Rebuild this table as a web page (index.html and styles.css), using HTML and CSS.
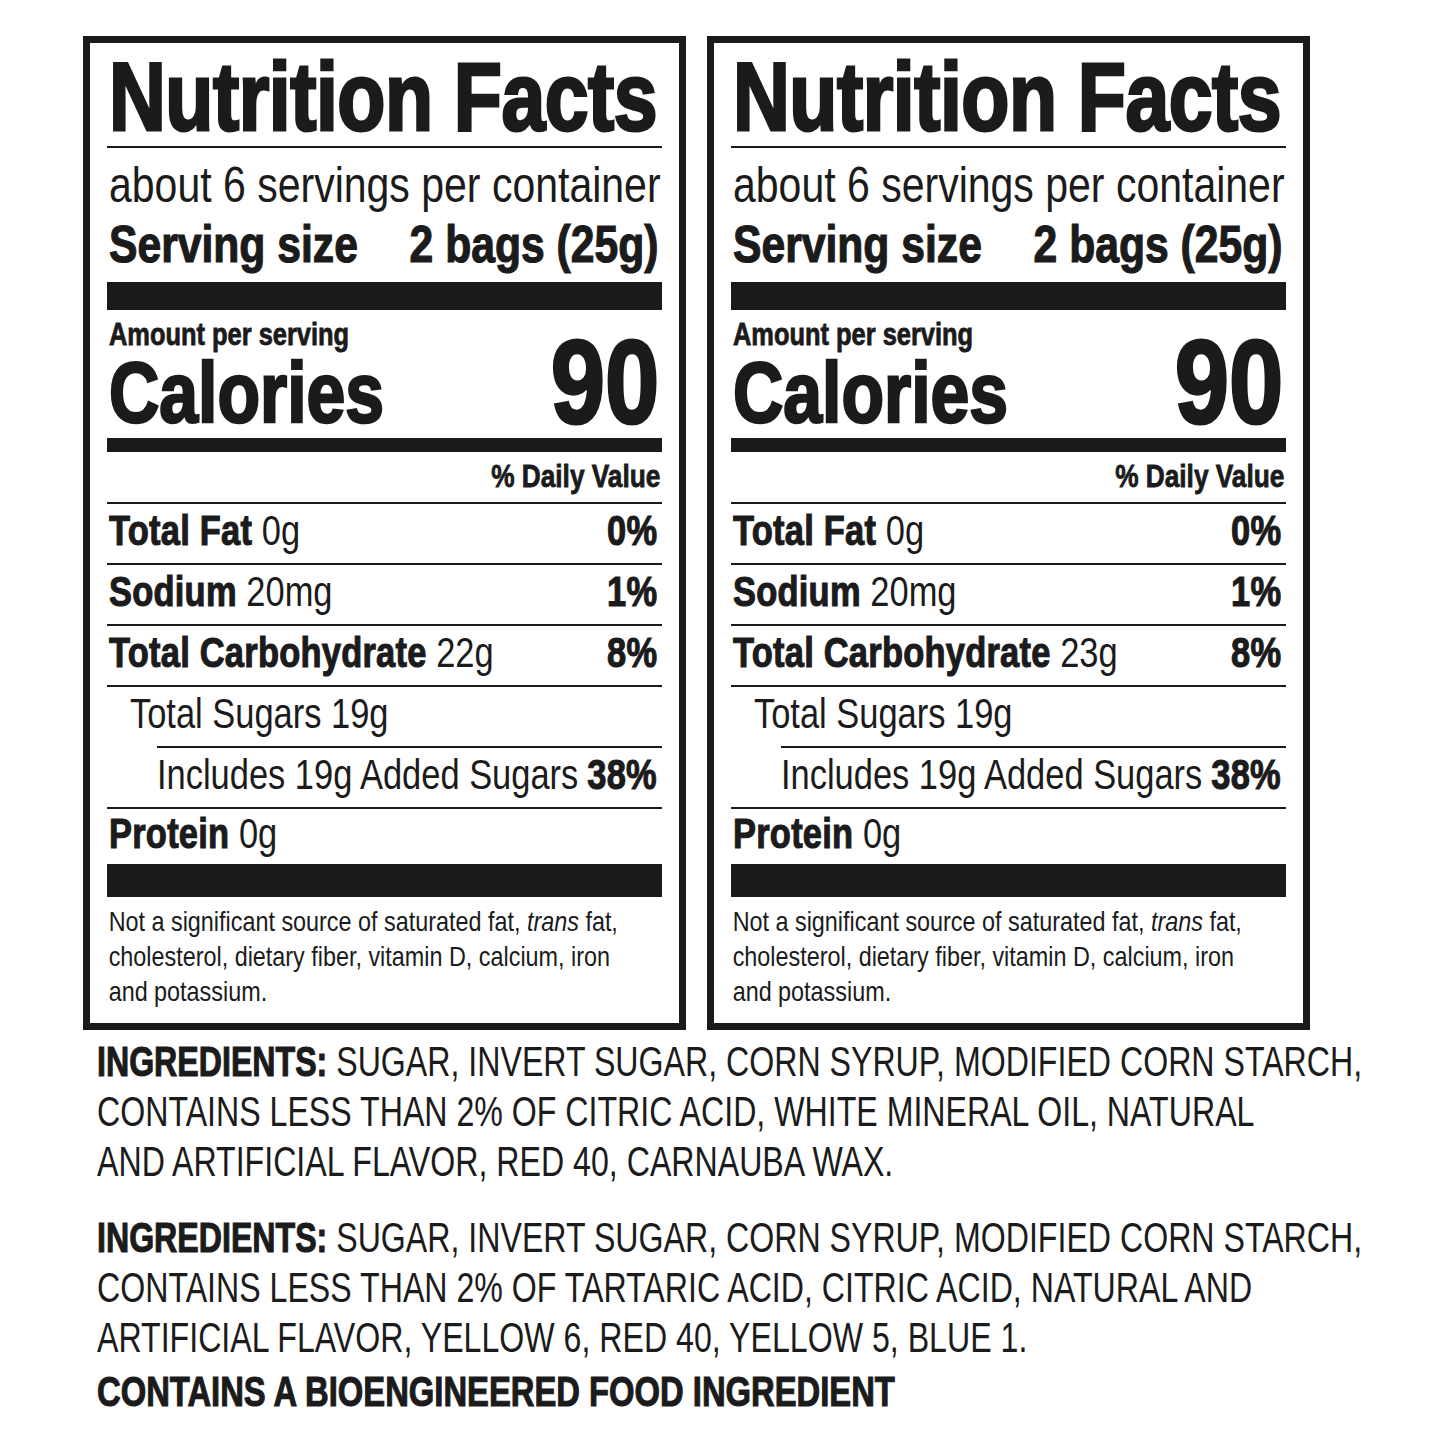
FILE: index.html
```html
<!DOCTYPE html>
<html lang="en">
<head>
<meta charset="utf-8">
<title>Nutrition Facts</title>
<link rel="stylesheet" href="styles.css">
</head>
<body>
<main class="page">
  <section class="labels">
    <div class="label">
      <div class="title"><span class="n">Nutrition Facts</span></div>
      <div class="servings"><span class="n">about 6 servings per container</span></div>
      <div class="serving-size"><span class="n l">Serving size</span><span class="n r">2 bags (25g)</span></div>
      <div class="bar bar-lg"></div>
      <div class="cal">
        <div class="cal-left">
          <div class="amount"><span class="n">Amount per serving</span></div>
          <div class="calories"><span class="n">Calories</span></div>
        </div>
        <div class="kcal"><span class="n r">90</span></div>
      </div>
      <div class="dv-head"><span class="n r">% Daily Value</span></div>
      <div class="row"><span class="n l"><b>Total Fat</b> 0g</span><b class="n r">0%</b></div>
      <div class="row"><span class="n l"><b>Sodium</b> 20mg</span><b class="n r">1%</b></div>
      <div class="row"><span class="n l"><b>Total Carbohydrate</b> 22g</span><b class="n r">8%</b></div>
      <div class="row sugars"><span class="n l">Total Sugars 19g</span></div>
      <div class="row added"><span class="n l">Includes 19g Added Sugars</span><b class="n r">38%</b></div>
      <div class="rule"></div>
      <div class="row protein"><span class="n l"><b>Protein</b> 0g</span></div>
      <div class="bar bar-xl"></div>
      <p class="foot">Not a significant source of saturated fat, <i>trans</i> fat,<br>cholesterol, dietary fiber, vitamin D, calcium, iron<br>and potassium.</p>
    </div>
    <div class="label">
      <div class="title"><span class="n">Nutrition Facts</span></div>
      <div class="servings"><span class="n">about 6 servings per container</span></div>
      <div class="serving-size"><span class="n l">Serving size</span><span class="n r">2 bags (25g)</span></div>
      <div class="bar bar-lg"></div>
      <div class="cal">
        <div class="cal-left">
          <div class="amount"><span class="n">Amount per serving</span></div>
          <div class="calories"><span class="n">Calories</span></div>
        </div>
        <div class="kcal"><span class="n r">90</span></div>
      </div>
      <div class="dv-head"><span class="n r">% Daily Value</span></div>
      <div class="row"><span class="n l"><b>Total Fat</b> 0g</span><b class="n r">0%</b></div>
      <div class="row"><span class="n l"><b>Sodium</b> 20mg</span><b class="n r">1%</b></div>
      <div class="row"><span class="n l"><b>Total Carbohydrate</b> 23g</span><b class="n r">8%</b></div>
      <div class="row sugars"><span class="n l">Total Sugars 19g</span></div>
      <div class="row added"><span class="n l">Includes 19g Added Sugars</span><b class="n r">38%</b></div>
      <div class="rule"></div>
      <div class="row protein"><span class="n l"><b>Protein</b> 0g</span></div>
      <div class="bar bar-xl"></div>
      <p class="foot">Not a significant source of saturated fat, <i>trans</i> fat,<br>cholesterol, dietary fiber, vitamin D, calcium, iron<br>and potassium.</p>
    </div>
  </section>
  <section class="ingredients">
    <p class="ing"><b>INGREDIENTS:</b> SUGAR, INVERT SUGAR, CORN SYRUP, MODIFIED CORN STARCH,<br>CONTAINS LESS THAN 2% OF CITRIC ACID, WHITE MINERAL OIL, NATURAL<br>AND ARTIFICIAL FLAVOR, RED 40, CARNAUBA WAX.</p>
    <p class="ing second"><b>INGREDIENTS:</b> SUGAR, INVERT SUGAR, CORN SYRUP, MODIFIED CORN STARCH,<br>CONTAINS LESS THAN 2% OF TARTARIC ACID, CITRIC ACID, NATURAL AND<br>ARTIFICIAL FLAVOR, YELLOW 6, RED 40, YELLOW 5, BLUE 1.</p>
    <p class="bio">CONTAINS A BIOENGINEERED FOOD INGREDIENT</p>
  </section>
</main>
</body>
</html>
```

FILE: styles.css
```css
html, body {
  margin: 0;
  padding: 0;
  background: #ffffff;
}

body {
  font-family: "Liberation Sans", Arial, sans-serif;
  color: #1b1b1b;
}

/* condensed rendering: Liberation Sans compressed to Arial Narrow proportions */
.n {
  display: inline-block;
  white-space: nowrap;
  transform: scaleX(0.82);
  transform-origin: left center;
}

.n.r {
  transform-origin: right center;
}

.page {
  padding: 36px 0 0 0;
}

.labels {
  display: flex;
  gap: 21px;
  padding-left: 83px;
}

.label {
  box-sizing: border-box;
  width: 603px;
  height: 994px;
  border: 7px solid #1b1b1b;
  padding: 0 17px;
  display: flex;
  flex-direction: column;
}

.title {
  font-weight: 700;
  font-size: 96px;
  line-height: 99px;
  padding-top: 4px;
  padding-left: 2px;
  letter-spacing: -0.6px;
  white-space: nowrap;
  -webkit-text-stroke: 3px #1b1b1b;
  border-bottom: 2px solid #1b1b1b;
}

.servings {
  font-size: 50px;
  line-height: 56px;
  padding-top: 9px;
  padding-left: 2px;
  white-space: nowrap;
}

.serving-size {
  display: flex;
  font-weight: 700;
  font-size: 52px;
  line-height: 56px;
  padding: 3px 4px 0 2px;
  white-space: nowrap;
  -webkit-text-stroke: 1.2px #1b1b1b;
}

.l {
  flex: 1 1 0;
  min-width: 0;
}

.r {
  flex: none;
}

.bar {
  background: #1b1b1b;
  flex: none;
}

.bar-lg {
  height: 28px;
  margin-top: 10px;
}

.bar-xl {
  height: 33px;
}

.cal {
  display: flex;
  justify-content: space-between;
  align-items: flex-end;
  padding-bottom: 5px;
  border-bottom: 14px solid #1b1b1b;
}

.amount {
  font-weight: 700;
  font-size: 31px;
  line-height: 34px;
  padding-top: 8px;
  padding-left: 2px;
  white-space: nowrap;
  -webkit-text-stroke: 0.8px #1b1b1b;
}

.calories {
  font-weight: 700;
  font-size: 85px;
  line-height: 80px;
  padding-top: 1px;
  padding-left: 2px;
  -webkit-text-stroke: 2.6px #1b1b1b;
}

.kcal {
  font-weight: 700;
  font-size: 119px;
  line-height: 103px;
  padding-right: 3px;
  -webkit-text-stroke: 3px #1b1b1b;
}

.dv-head {
  font-weight: 700;
  font-size: 32px;
  line-height: 34px;
  padding: 7px 2px 9px 0;
  text-align: right;
  border-bottom: 2px solid #1b1b1b;
  -webkit-text-stroke: 0.8px #1b1b1b;
}

.row {
  box-sizing: border-box;
  height: 61px;
  display: flex;
  font-size: 42px;
  line-height: 48px;
  padding: 3px 5px 0 2px;
  border-bottom: 2px solid #1b1b1b;
  white-space: nowrap;
}

.row b {
  -webkit-text-stroke: 1.1px #1b1b1b;
  letter-spacing: 0.3px;
}

.row.sugars {
  height: 59px;
  border-bottom: none;
  padding-left: 23px;
}

.row.added {
  height: 61px;
  border-bottom: none;
  border-top: 2px solid #1b1b1b;
  margin-left: 50px;
  padding-left: 0;
}

.rule {
  height: 2px;
  background: #1b1b1b;
  flex: none;
}

.row.protein {
  height: 55px;
  padding-top: 1px;
  border-bottom: none;
}

.foot {
  margin: 0;
  padding: 7px 0 0 2px;
  font-size: 28.5px;
  line-height: 35px;
  white-space: nowrap;
  transform: scaleX(0.82);
  transform-origin: left top;
}

.foot i {
  font-style: italic;
}

.ingredients {
  padding-left: 97px;
  padding-top: 7px;
}

.ing {
  margin: 0;
  font-size: 42px;
  line-height: 50px;
  white-space: nowrap;
  transform: scaleX(0.765);
  transform-origin: left top;
}

.ing b {
  -webkit-text-stroke: 1.1px #1b1b1b;
}

.ing.second {
  margin-top: 26px;
}

.bio {
  margin: 4px 0 0 0;
  font-size: 42px;
  line-height: 50px;
  font-weight: 700;
  white-space: nowrap;
  -webkit-text-stroke: 1.1px #1b1b1b;
  transform: scaleX(0.78);
  transform-origin: left top;
}
```
